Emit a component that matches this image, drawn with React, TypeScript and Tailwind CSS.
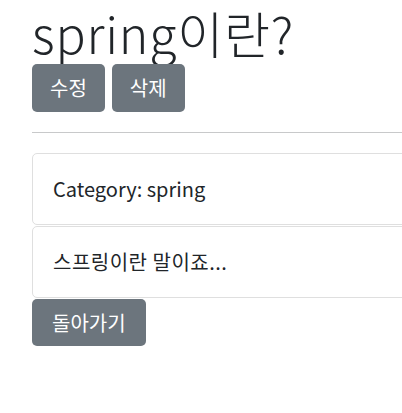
const font = { fontFamily: '"Noto Sans CJK KR", "Noto Sans", sans-serif' };

const GrayButton = ({ label }: { label: string }) => (
  <button className="h-[48px] rounded-[5px] bg-[#6c757d] px-[18px] text-[20px] leading-[30px] text-white">
    {label}
  </button>
);

const Card = ({ children }: { children: React.ReactNode }) => (
  <div className="h-[72px] rounded-[5px] border border-[#dfdfdf] px-[20px] py-[20px] text-[20px] leading-[30px] text-[#212529]">
    {children}
  </div>
);

export default function App() {
  return (
    <div className="w-full overflow-hidden bg-white" style={font}>
      <div className="w-[700px] pl-[32px] text-[#212529]">
        <h1 className="mb-[2px] pt-[2px] text-[50px] leading-[60px] font-light tracking-[0.8px]">
          spring이란?
        </h1>
        <div className="flex gap-[7px]">
          <GrayButton label="수정" />
          <GrayButton label="삭제" />
        </div>
        <hr className="mt-[20px] border-t border-[#c8c9ca]" />
        <div className="mt-[20px] flex flex-col gap-[1px]">
          <Card>Category: spring</Card>
          <Card>
            <span className="tracking-[0.5px]">스프링이란 말이죠...</span>
          </Card>
        </div>
        <div className="mt-[1px] flex">
          <button className="h-[47px] rounded-[5px] bg-[#6c757d] px-[20px] text-[20px] leading-[30px] text-white">
            돌아가기
          </button>
        </div>
      </div>
    </div>
  );
}
